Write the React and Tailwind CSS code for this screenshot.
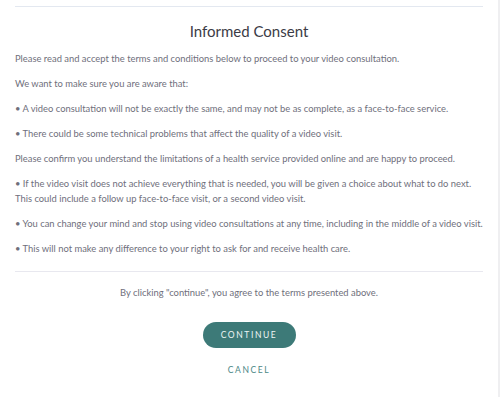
export default function App() {
  const items = [
    { text: 'Please read and accept the terms and conditions below to proceed to your video consultation.' },
    { text: 'We want to make sure you are aware that:' },
    { text: '• A video consultation will not be exactly the same, and may not be as complete, as a face-to-face service.' },
    { text: '• There could be some technical problems that affect the quality of a video visit.' },
    { text: 'Please confirm you understand the limitations of a health service provided online and are happy to proceed.' },
    { text: '• If the video visit does not achieve everything that is needed, you will be given a choice about what to do next. This could include a follow up face-to-face visit, or a second video visit.' },
    { text: '• You can change your mind and stop using video consultations at any time, including in the middle of a video visit.' },
    { text: '• This will not make any difference to your right to ask for and receive health care.' },
  ];

  return (
    <div className="flex w-[500px] h-[397px] bg-white overflow-hidden" style={{ fontFamily: 'Lato, "Open Sans", sans-serif' }}>
      <div className="w-[498px] px-[15px] pt-[6px]">
        <div className="border-t border-[#e3e8f0]" />

        <h1 className="mt-[14px] text-center text-[15px] leading-[20px] text-[#3b3b46]">
          Informed Consent
        </h1>

        {/* Terms */}
        <div className="mt-[10px] flex flex-col gap-[10px] text-[9.4px] leading-[15px] text-[#6f6f7c]">
          {items.map((item, i) => (
            <p key={i}>{item.text}</p>
          ))}
        </div>

        <div className="mt-[15px] border-t border-[#e8e8ef]" />

        <p className="mt-[13px] text-center text-[9.4px] leading-[15px] text-[#6f6f7c]">
          By clicking "continue", you agree to the terms presented above.
        </p>

        <div className="mt-[22px] flex flex-col items-center">
          <button className="w-[93px] h-[26px] rounded-full bg-[#3d7a78] text-[#eef5f4] text-[8.5px] tracking-[1.6px]">
            CONTINUE
          </button>
          <button className="mt-[15px] text-[#4b8886] text-[8.5px] tracking-[1.6px] leading-[15px]">
            CANCEL
          </button>
        </div>
      </div>
      <div className="w-[2px] bg-[#efeff1]" />
    </div>
  );
}
